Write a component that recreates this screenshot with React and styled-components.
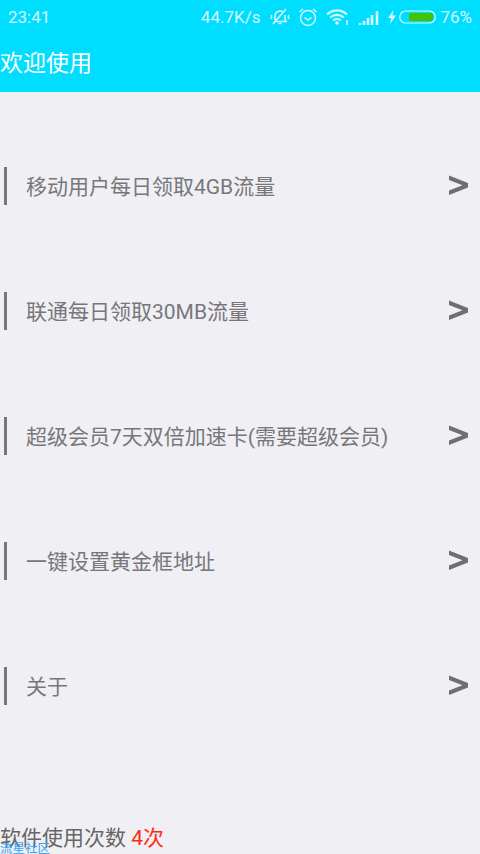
import React from 'react';
import styled, { createGlobalStyle } from 'styled-components';

const GlobalStyle = createGlobalStyle`
  html, body {
    margin: 0;
    padding: 0;
    background: #efeff4;
  }
`;

const cjk = `"Noto Sans CJK SC", sans-serif`;

const Page = styled.div`
  position: relative;
  width: 480px;
  height: 854px;
  overflow: hidden;
  display: flex;
  flex-direction: column;
  background: #efeff4;
  font-family: "Roboto", ${cjk};
`;

const Header = styled.header`
  height: 92px;
  flex: none;
  background: #00deff;
  color: #fff;
`;

const StatusBar = styled.div`
  height: 34px;
  display: flex;
  align-items: center;
  padding: 0 8px;
  font-size: 17px;
  color: #d4f8ff;
`;

const Clock = styled.span`
  flex: 1;
`;

const Speed = styled.span`
  margin-right: 10px;
`;

const StatusIcon = styled.svg`
  display: block;
  flex: none;
  margin-right: ${(p) => p.$gap}px;
  fill: none;
  stroke: #d4f8ff;
  stroke-width: 1.5;
`;

const Percent = styled.span`
  margin-left: 4px;
`;

const Title = styled.h1`
  margin: 0;
  padding-top: 3px;
  font-size: 23px;
  line-height: 54px;
  font-weight: 400;
`;

const Menu = styled.div`
  padding-top: 31px;
  flex: none;
`;

const Row = styled.div`
  height: 125px;
  display: flex;
  align-items: center;
  padding: 0 11px 0 4px;
`;

const RowBar = styled.span`
  width: 3px;
  height: 38px;
  background: #77777b;
  margin-right: 19px;
`;

const RowLabel = styled.span`
  flex: 1;
  padding-bottom: 2px;
  font-size: 21px;
  color: #77777b;
`;

const Chevron = styled.svg`
  display: block;
  margin-bottom: 2px;
  fill: #6f6f73;
`;

const UsageLine = styled.div`
  position: absolute;
  left: 0;
  top: 823px;
  font-size: 21px;
  line-height: 30px;
  color: #666;
`;

const Count = styled.span`
  color: #ff2a12;
`;

const Community = styled.a`
  position: absolute;
  left: 0;
  top: 841px;
  font-size: 12.5px;
  line-height: 16px;
  color: #35a5f5;
`;

const items = [
  '移动用户每日领取4GB流量',
  '联通每日领取30MB流量',
  '超级会员7天双倍加速卡(需要超级会员)',
  '一键设置黄金框地址',
  '关于',
];

const App = () => (
  <Page>
    <GlobalStyle />
    <Header>
      <StatusBar>
        <Clock>23:41</Clock>
        <Speed>44.7K/s</Speed>
        <StatusIcon $gap={8} width="20" height="18" viewBox="0 0 20 18">
          <path d="M5 12V8a5 5 0 0 1 8-4M15 7v5l1 1.500H4M8.500 15.500h3M1.500 7v4M18.500 7v4" />
          <path d="M3 16 16 1" />
        </StatusIcon>
        <StatusIcon $gap={8} width="20" height="20" viewBox="0 0 20 20">
          <circle cx="10" cy="11" r="7.500" />
          <path d="M6.500 10.500 10 13l3.500-2.500M1.500 5 5 2M18.500 5 15 2" />
        </StatusIcon>
        <StatusIcon $gap={9} width="23" height="18" viewBox="0 0 23 18">
          <path d="M1 6.500C7 1 15 1 21 6.500M4 9.500c4.500-3.500 9.500-3.500 14 0M7 12.500c2.500-2 5.500-2 8 0" strokeWidth="2.200" />
          <circle cx="11" cy="15" r="1.800" fill="#d4f8ff" stroke="none" />
          <path d="M21 12v5" />
        </StatusIcon>
        <StatusIcon $gap={8} width="22" height="16" viewBox="0 0 22 16">
          <path d="M2 14v2M6 12v4M10 9v7M14 6v10M19 2v14" strokeWidth="2.600" />
        </StatusIcon>
        <StatusIcon $gap={3} width="8" height="14" viewBox="0 0 8 14">
          <path d="M5.500 0 0 8h3.200L2 14l6-8.500H4.500z" fill="#d4f8ff" stroke="none" />
        </StatusIcon>
        <StatusIcon $gap={0} width="37" height="14" viewBox="0 0 37 14">
          <rect x=".75" y="1" width="35.500" height="12" rx="6" strokeWidth="1.200" />
          <rect x="10" y="3" width="24" height="8" rx="2" fill="#45c200" stroke="none" />
        </StatusIcon>
        <Percent>76%</Percent>
      </StatusBar>
      <Title>欢迎使用</Title>
    </Header>
    <Menu>
      {items.map((label) => (
        <Row key={label}>
          <RowBar />
          <RowLabel>{label}</RowLabel>
          <Chevron width="21" height="22" viewBox="0 0 21 22">
            <path d="M1 1.500 20 9v4.500L1 21v-4.500L14.500 11.200 1 6z" />
          </Chevron>
        </Row>
      ))}
    </Menu>
    <UsageLine>
      软件使用次数 <Count>4次</Count>
    </UsageLine>
    <Community>流星社区</Community>
  </Page>
);

export default App;
